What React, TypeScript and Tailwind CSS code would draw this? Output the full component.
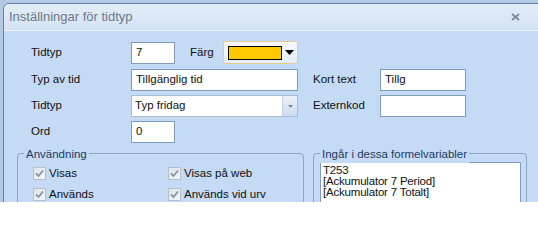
import React from "react";

const font = { fontFamily: '"Liberation Sans", Arial, sans-serif' };

function TextBox({ value, className }: { value?: string; className: string }) {
  return (
    <div className={`h-[22px] bg-white border border-[#7f9db9] flex items-center pl-[4px] text-[11.5px] text-[#111] ${className}`}>
      {value}
    </div>
  );
}

function Check({ label }: { label: string }) {
  return (
    <div className="flex items-center h-[21px]">
      <div className="w-[13px] h-[13px] border border-[#b7c0ca] bg-gradient-to-br from-[#dfe3e8] to-[#f4f6f8] flex items-center justify-center">
        <svg width="9" height="9" viewBox="0 0 9 9">
          <path d="M1 4.5 L3.5 7 L8 1.5" fill="none" stroke="#8b949e" strokeWidth="1.8" />
        </svg>
      </div>
      <span className="ml-[3px] text-[11.5px] text-[#111]">{label}</span>
    </div>
  );
}

function Label({ children, className = "" }: { children: React.ReactNode; className?: string }) {
  return <div className={`text-[11.5px] text-[#111] ${className}`}>{children}</div>;
}

export default function App() {
  return (
    <div className="w-[538px] h-[202px] overflow-hidden bg-[#b4c9e3] pt-[3px] pl-[3px]" style={font}>
      <div className="w-[545px] h-[215px] border border-[#5f7fa8] rounded-tl-[6px] overflow-hidden bg-[#c4daf5]">
        {/* title bar */}
        <div className="h-[27px] flex items-center justify-between bg-gradient-to-b from-[#e4edf8] to-[#d4e2f3] border-b border-[#eef4fb]">
          <span className="ml-[5px] text-[13px] text-[#6b7a8c]">Inställningar för tidtyp</span>
          <svg width="9" height="8" viewBox="0 0 9 8" className="mr-[27px]">
            <path d="M1 1 L8 7 M8 1 L1 7" stroke="#7f8a98" strokeWidth="1.8" />
          </svg>
        </div>

        {/* fields */}
        <div className="pt-[10px] pl-[27px] flex flex-col gap-[4px]">
          <div className="flex items-center h-[23px] mb-[1px]">
            <Label className="w-[100px]">Tidtyp</Label>
            <TextBox value="7" className="w-[44px]" />
            <Label className="ml-[15px] w-[33px]">Färg</Label>
            <div className="w-[75px] h-[23px] rounded-[2px] border border-[#e2cc95] bg-gradient-to-b from-[#f8f9fb] to-[#e6edf6] flex items-center pl-[4px]">
              <div className="w-[54px] h-[14px] bg-[#ffc800] border border-black" />
              <svg width="9" height="5" viewBox="0 0 9 5" className="ml-[3px]">
                <path d="M0 0 H9 L4.5 5 Z" fill="#000" />
              </svg>
            </div>
          </div>
          <div className="flex items-center">
            <Label className="w-[100px]">Typ av tid</Label>
            <TextBox value="Tillgänglig tid" className="w-[167px]" />
            <Label className="ml-[15px] w-[67px]">Kort text</Label>
            <TextBox value="Tillg" className="w-[86px]" />
          </div>
          <div className="flex items-center">
            <Label className="w-[100px]">Tidtyp</Label>
            <div className="w-[167px] h-[22px] bg-white border border-[#a9bdd5] flex items-center">
              <span className="flex-1 pl-[3px] text-[11.5px] text-[#111]">Typ fridag</span>
              <div className="w-[15px] h-[20px] bg-gradient-to-b from-[#eaf1f9] to-[#cddcee] border-l border-[#c4d4e7] flex items-center justify-center">
                <svg width="5" height="3" viewBox="0 0 5 3">
                  <path d="M0 0 H5 L2.5 3 Z" fill="#7d8a9b" />
                </svg>
              </div>
            </div>
            <Label className="ml-[15px] w-[67px]">Externkod</Label>
            <TextBox className="w-[86px]" />
          </div>
          <div className="flex items-center">
            <Label className="w-[100px]">Ord</Label>
            <TextBox value="0" className="w-[44px]" />
          </div>
        </div>

        {/* group boxes */}
        <div className="flex mt-[10px] ml-[13px] gap-[9px]">
          <div className="relative w-[287px] h-[80px] border border-[#8ea5c3] rounded-[4px]">
            <span className="absolute -top-[8px] left-[6px] px-[2px] bg-[#c4daf5] text-[11.5px] text-[#1d3a66]">Användning</span>
            <div className="grid grid-cols-[135px_1fr] pt-[9px] pl-[15px]">
              <Check label="Visas" />
              <Check label="Visas på web" />
              <Check label="Används" />
              <Check label="Används vid urv" />
            </div>
          </div>
          <div className="relative w-[214px] h-[80px] border border-[#8ea5c3] rounded-[4px]">
            <span className="absolute -top-[8px] left-[6px] px-[2px] bg-[#c4daf5] text-[11.5px] text-[#1d3a66]">Ingår i dessa formelvariabler</span>
            <div className="mt-[8px] ml-[6px] w-[201px] h-[60px] bg-white border border-[#7f9db9] pl-[2px] pt-[2px] text-[11.5px] leading-[11px] text-[#111] tracking-[-0.2px]">
              <div>T253</div>
              <div>[Ackumulator 7 Period]</div>
              <div>[Ackumulator 7 Totalt]</div>
            </div>
          </div>
        </div>
      </div>
    </div>
  );
}
